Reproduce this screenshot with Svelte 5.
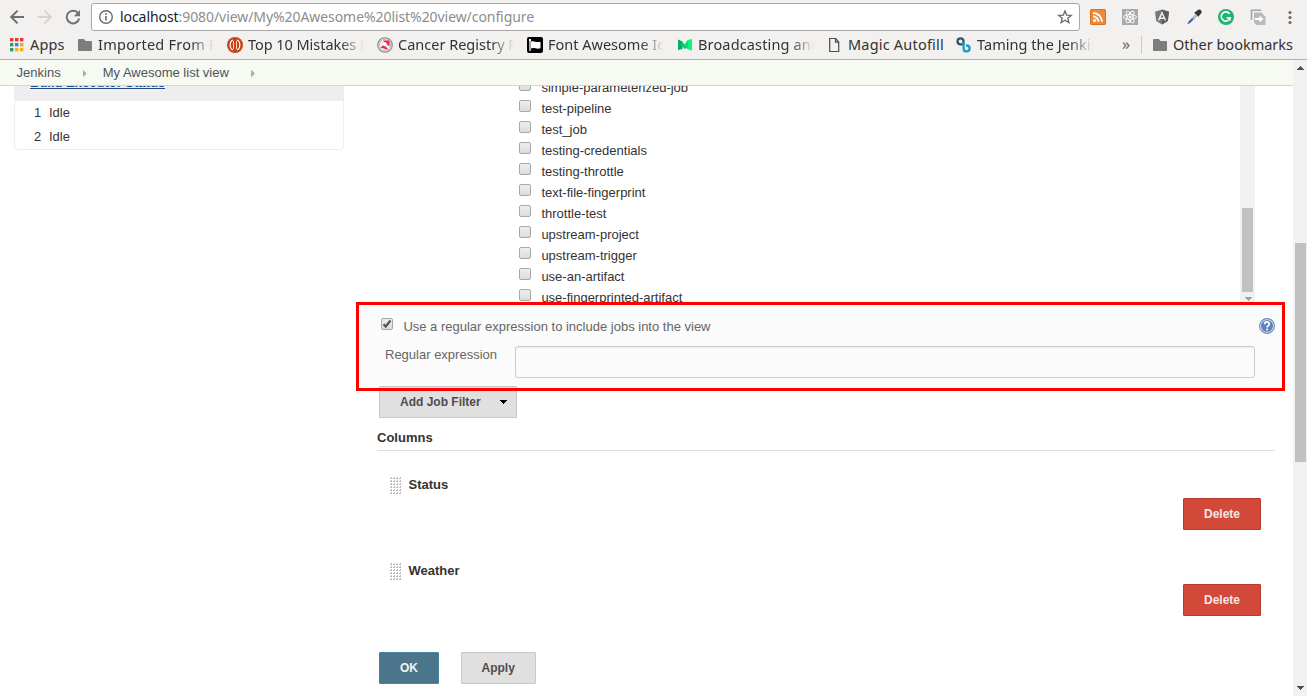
<script>
  const bookmarks = [
    { icon: 'apps', text: 'Apps', width: 68, pad: 20, ls: 0.15 },
    { icon: 'folder', text: 'Imported From Fi', width: 149, pad: 20, fade: true, ls: 0.25 },
    { icon: 'tomato', text: 'Top 10 Mistakes M', width: 150, pad: 21, fade: true, ls: -0.05 },
    { icon: 'cancer', text: 'Cancer Registry P', width: 150, pad: 21, fade: true, ls: 0 },
    { icon: 'flag', text: 'Font Awesome Ico', width: 150, pad: 21, fade: true, ls: 0 },
    { icon: 'medium', text: 'Broadcasting and', width: 150, pad: 21, fade: true, ls: 0.15 },
    { icon: 'page', text: 'Magic Autofill', width: 129, pad: 21, ls: 0.2 },
    { icon: 'links', text: 'Taming the Jenkin', width: 150, pad: 21, fade: true, ls: 0.05 }
  ];
  const extensions = ['rss', 'react', 'angular', 'dropper', 'grammar', 'copy', 'menu'];
  const jobs = [
    'simple-parameterized-job', 'test-pipeline', 'test_job', 'testing-credentials',
    'testing-throttle', 'text-file-fingerprint', 'throttle-test', 'upstream-project',
    'upstream-trigger', 'use-an-artifact', 'use-fingerprinted-artifact'
  ];
  const columns = ['Status', 'Weather'];
  const appColors = ['#e53a30', '#e53a30', '#e53a30', '#2f9e58', '#3a80e8', '#e9a820', '#2f9e58', '#f2b50f', '#f2b50f'];
</script>

{#snippet icon(name)}
  <svg class="icon" width="16" height="16" viewBox="0 0 16 16" fill="none">
    {#if name === 'back' || name === 'forward'}
      <g transform={name === 'forward' ? 'matrix(-1 0 0 1 16 0)' : ''} stroke={name === 'back' ? '#6e6e6e' : '#d5d4d3'} stroke-width="2">
        <path d="M15 8H2.5M8.6 1.6 2.2 8l6.4 6.4" />
      </g>
    {:else if name === 'reload'}
      <path d="M13.2 4.4A6.3 6.3 0 1 0 14.2 9.5" stroke="#737373" stroke-width="2" />
      <path d="M15 1v6.3H8.8z" fill="#737373" />
    {:else if name === 'info'}
      <circle cx="8" cy="8" r="6.3" stroke="#6b6b6b" stroke-width="1.4" />
      <path d="M8 7v4.4M8 4.3v1.6" stroke="#6b6b6b" stroke-width="1.6" />
    {:else if name === 'star'}
      <path d="m8 1.9 1.7 4.2 4.6.3-3.5 2.9 1.1 4.4L8 11.3l-3.9 2.4 1.1-4.4-3.5-2.9 4.6-.3z" stroke="#686868" stroke-width="1.3" />
    {:else if name === 'apps'}
      {#each appColors as c, i}
        <rect x={(i % 3) * 5} y={1 + Math.floor(i / 3) * 5} width="3.4" height="3.4" fill={c} />
      {/each}
    {:else if name === 'folder'}
      <path d="M1 2h5l1.6 2H13a1 1 0 0 1 1 1v8a1 1 0 0 1-1 1H1a1 1 0 0 1-1-1V3a1 1 0 0 1 1-1z" fill="#7d7d7d" />
    {:else if name === 'tomato'}
      <circle cx="8" cy="8" r="8" fill="#cb4216" />
      <path d="M6 3C4.300 3.600 3.200 5.300 3.200 8s1.100 4.400 2.800 5M10 3c1.700.6 2.800 2.300 2.800 5s-1.100 4.400-2.800 5" stroke="#fff" stroke-width="1.200" />
      <path d="M6.500 4v8M9.500 4v8" stroke="#f6d8cb" stroke-width="1" />
    {:else if name === 'cancer'}
      <circle cx="8" cy="8" r="7.300" fill="#ececec" stroke="#858585" stroke-width="1.100" />
      <circle cx="8" cy="8" r="5.700" stroke="#aaa" stroke-dasharray="3 1" />
      <path d="M6 3.500h6.500V9L9.500 7.500z" fill="#e8294c" />
      <path d="M3.500 10.500 6 8.500l2.500 1 2.500 2.500-2 .5-2-1z" fill="#e8294c" />
      <path d="m5 7.500 3-2.500 2.500 2L7.500 9z" fill="#fff" />
    {:else if name === 'flag'}
      <rect width="16" height="16" rx="2" fill="#000" />
      <path d="M3 3v11" stroke="#fff" stroke-width="1.300" />
      <path d="M4 4.500c3-1.200 5 1.500 9.500.2v6.600c-4.500 1.300-6.500-1.500-9.500.2z" fill="#fff" />
      <circle cx="3" cy="3" r="1.200" fill="#fff" />
    {:else if name === 'medium'}
      <path d="M1 2.500 5.500 4.500v7.500L1 13z" fill="#00ab6b" />
      <path d="m4.500 4 6 6.500-2.500 1.500L4.500 9z" fill="#00cf70" />
      <path d="m11 3 4-1v11.500L10 12V7z" fill="#0af579" />
      <path d="M7.500 7.500 11 2.700V11z" fill="#06df70" />
    {:else if name === 'page'}
      <path d="M2.700 1.500h6l3 3.500v9.500h-9z" stroke="#4c4c4c" stroke-width="1.200" />
      <path d="M8.500 1.500V5.200h3.200" stroke="#4c4c4c" stroke-width="1.200" />
    {:else if name === 'links'}
      <path d="M8 7.300H4.200A3 3 0 1 1 7.500 4v3.500" stroke="#31566a" stroke-width="2.300" />
      <path d="M7.600 5.500V11.600A3 3 0 1 0 11 8.500H10" stroke="#219bc0" stroke-width="2.300" />
    {:else if name === 'rss'}
      <rect width="16" height="16" rx="2" fill="#ef8a3a" />
      <rect x=".5" y=".5" width="15" height="15" rx="1.500" stroke="#dc7020" />
      <circle cx="4.600" cy="11.400" r="1.500" fill="#fff" />
      <path d="M3.200 7.500A5.300 5.300 0 0 1 8.500 12.800M3.200 4A8.800 8.800 0 0 1 12 12.800" stroke="#fff" stroke-width="1.800" />
    {:else if name === 'react'}
      <rect width="16" height="16" fill="#a9a9a9" />
      <g stroke="#fff" stroke-width=".9">
        <ellipse cx="8" cy="8" rx="6.500" ry="2.500" />
        <ellipse cx="8" cy="8" rx="6.500" ry="2.500" transform="rotate(60 8 8)" />
        <ellipse cx="8" cy="8" rx="6.500" ry="2.500" transform="rotate(120 8 8)" />
      </g>
      <circle cx="8" cy="8" r="1.300" fill="#fff" />
    {:else if name === 'angular'}
      <path d="m8 .5 7 2.300-1.200 9.200L8 15.500l-5.800-3.500L1 2.800z" fill="#777" />
      <path d="m8 .5 7 2.300-1.200 9.200L8 15.500z" fill="#5d5d5d" />
      <path d="M4.600 11.400 8 3.800l3.400 7.600M5.700 9.200h4.600" stroke="#eee" stroke-width="1.400" />
    {:else if name === 'dropper'}
      <path d="m10 5.500-7.300 7.300-.9 2 2-.9 7.300-7.300" fill="#d6e0f4" stroke="#8d9096" stroke-width="1" />
      <path d="m6 9.500-3.300 3.300L2 14.500l1.900-.7L7.800 9.800z" fill="#2755d0" />
      <path d="M9 3.200 13 7.200M10 4.200 12.300 1.700a1.500 1.500 0 0 1 2.100 2.100L12.200 6z" fill="#333" stroke="#333" stroke-width="1.800" />
    {:else if name === 'grammar'}
      <circle cx="8" cy="8" r="8" fill="#1cb574" />
      <path d="M11.500 4.700A4.600 4.600 0 1 0 12.200 9H8.500" stroke="#fff" stroke-width="1.600" />
      <path d="M12 8.200v3.400" stroke="#fff" stroke-width="1.200" />
    {:else if name === 'copy'}
      <path d="M1.500 11V1.200H11" stroke="#a5a5a5" stroke-width="1.600" />
      <path d="M4 3.500h7.500L15.500 8v8H6.500L4 13.500z" fill="#b9b9b9" />
      <path d="M5 9h4.500V6.500l4 3.500-4 3.500V11H5z" fill="#fff" />
    {:else if name === 'menu'}
      <circle cx="8" cy="3.500" r="1.600" fill="#6b6b6b" /><circle cx="8" cy="8.500" r="1.600" fill="#6b6b6b" /><circle cx="8" cy="13.500" r="1.600" fill="#6b6b6b" />
    {:else if name === 'help'}
      <circle cx="8" cy="8" r="7.400" fill="#e9eef6" stroke="#6584b4" stroke-width="1.100" />
      <circle cx="8" cy="8" r="6" fill="#5f82b5" />
      <path d="M5.700 6.200c0-3 4.600-2.900 4.600-.2 0 1.700-2.200 1.800-2.200 3.500" stroke="#fff" stroke-width="1.700" />
      <rect x="7.200" y="10.600" width="1.800" height="1.800" fill="#fff" />
    {/if}
  </svg>
{/snippet}

{#snippet arrow(color, up)}
  <svg class="arrow" width="8" height="4" viewBox="0 0 8 4" shape-rendering="crispEdges">
    <path d={up ? 'M0 4 4 0l4 4z' : 'M0 0h8L4 4z'} fill={color} />
  </svg>
{/snippet}

<div class="window">
  <header class="chrome">
    <div class="toolbar">
      <div class="nav">{@render icon('back')}{@render icon('forward')}{@render icon('reload')}</div>
      <div class="address">
        {@render icon('info')}
        <span class="url"><b>localhost</b>:9080/view/My%20Awesome%20list%20view/configure</span>
        {@render icon('star')}
      </div>
      <div class="extensions">{#each extensions as e}{@render icon(e)}{/each}</div>
    </div>
    <div class="bookmarks">
      {#each bookmarks as b}
        <div class="bookmark" style:width="{b.width}px">
          <span class="mark" style:width="{b.pad}px">{@render icon(b.icon)}</span>
          <span class="label" class:fade={b.fade} style:letter-spacing="{b.ls}px">{b.text}</span>
        </div>
      {/each}
      <span class="more">»</span>
      <div class="other"><span class="mark">{@render icon('folder')}</span><span class="label">Other bookmarks</span></div>
    </div>
  </header>

  <div class="viewport">
    <div class="page">
      <nav class="crumbs">
        <span>Jenkins</span><i></i><span>My Awesome list view</span><i></i>
      </nav>
      <div class="body">
        <aside>
          <div class="executors">
            <div class="head"><a href="#executors">Build Executor Status</a></div>
            <div class="executor"><span>1</span>Idle</div>
            <div class="executor"><span>2</span>Idle</div>
          </div>
        </aside>
        <main>
          <div class="jobs">
            <div class="job-list">
              {#each jobs as job}
                <label class="job"><span class="check"></span>{job}</label>
              {/each}
            </div>
            <div class="inner-scroll"><div class="inner-thumb"></div>{@render arrow('#a0a0a0', false)}</div>
          </div>
          <section class="regex">
            <div class="regex-top">
              <span class="check"><svg width="12" height="12" viewBox="0 0 12 12"><path d="M2.500 6.200 4.700 8.500 9.500 2.500" fill="none" stroke="#555" stroke-width="2.200" /></svg></span>
              <span class="regex-label">Use a regular expression to include jobs into the view</span>
              {@render icon('help')}
            </div>
            <div class="regex-row"><span>Regular expression</span><div class="input"></div></div>
          </section>
          <div class="btn filter">Add Job Filter{@render arrow('#000', false)}</div>
          <h2>Columns</h2>
          {#each columns as c}
            <div class="column">
              <div class="column-title">
                <svg width="12" height="18" shape-rendering="crispEdges">
                  {#each [0, 1, 2, 3, 4, 5] as y}{#each [0, 1, 2, 3] as x}
                    <path d="M{x * 3} {y * 3 + 1}h1v-1h1v2h-2z" fill="#bbb" />
                  {/each}{/each}
                </svg>
                <b>{c}</b>
              </div>
              <div class="btn delete">Delete</div>
            </div>
          {/each}
          <div class="actions"><div class="btn ok">OK</div><div class="btn apply">Apply</div></div>
        </main>
      </div>
    </div>
    <div class="scrollbar">{@render arrow('#505050', true)}<div class="thumb"></div>{@render arrow('#505050', false)}</div>
  </div>
</div>

<style>
  :global(body) { margin: 0; overflow: hidden; background: #fff; }
  .window { width: 1307px; height: 696px; overflow: hidden; display: flex; flex-direction: column; font: 13px/18px "Liberation Sans", Arial, sans-serif; color: #333; }
  .window * { box-sizing: border-box; }
  svg { display: block; flex: none; }
  .chrome { height: 60px; flex: none; background: #f2f1f0; border-bottom: 1px solid #b3b2b1; font-family: "Noto Sans", sans-serif; }
  .toolbar { display: flex; height: 31px; padding-top: 3px; }
  .nav { display: flex; gap: 12px; align-items: center; width: 91px; padding-left: 9px; }
  .address { display: flex; align-items: center; width: 989px; height: 28px; border: 1px solid #a9a8a7; border-radius: 3px; background: #fff; padding: 0 6px; }
  .url { flex: 1; margin-left: 6px; font-size: 14px; letter-spacing: -0.07px; color: #8d8d8d; white-space: nowrap; }
  .url b { font-weight: 400; color: #222; }
  .extensions { display: flex; align-items: center; gap: 16px; padding-left: 10px; }
  .bookmarks { display: flex; align-items: center; height: 28px; padding-left: 10px; color: #333; font-size: 14.5px; white-space: nowrap; }
  .bookmark { display: flex; align-items: center; flex: none; }
  .mark { flex: none; width: 20px; }
  .label { overflow: hidden; line-height: 22px; margin-top: -2px; }
  .fade { width: 116px; mask-image: linear-gradient(90deg, #000 80%, transparent 100%); }
  .more { width: 36px; padding-left: 16px; height: 18px; line-height: 16px; border-right: 1px solid #cbcac9; color: #666; font-size: 16px; }
  .other { display: flex; align-items: center; margin-left: 11px; }
  .viewport { flex: 1; min-height: 0; display: flex; }
  .page { width: 1293px; display: flex; flex-direction: column; min-height: 0; }
  .crumbs { display: flex; align-items: center; height: 26px; flex: none; background: #f6faf2; border-bottom: 1px solid #d3d7cf; padding-left: 16.6px; color: #4d545d; }
  .crumbs i { width: 4px; height: 8px; background: #ababab; clip-path: polygon(0 0, 100% 50%, 0 100%); margin: 2px 16px 0 22px; }
  .body { flex: 1; min-height: 0; overflow: hidden; display: flex; }
  aside { width: 344px; padding-left: 14px; }
  .executors { border: 1px solid #eee; border-top: 0; border-radius: 0 0 4px 4px; height: 64px; overflow: hidden; }
  .head { display: flex; align-items: flex-end; height: 15px; background: #eee; padding: 0 0 9px 15px; overflow: hidden; }
  .head a { flex: none; height: 18px; line-height: 18px; font-weight: 700; color: #204a87; text-decoration: underline; }
  .executor { height: 24px; line-height: 24px; padding-left: 19px; }
  .executor span { display: inline-block; width: 15px; }
  main { flex: 1; display: flex; flex-direction: column; align-items: flex-start; padding-left: 33px; }
  .jobs { display: flex; width: 878px; height: 217px; margin-bottom: -1px; }
  .job-list { width: 863px; height: 217px; overflow: hidden; padding-left: 142px; }
  .job { display: flex; align-items: center; height: 21px; }
  .job:first-child { margin-top: -9px; }
  .check { width: 12px; height: 12px; flex: none; border: 1px solid #a8a8a8; border-radius: 2px; background: linear-gradient(#eee, #dcdcdc); }
  .job .check { margin: -5px 10.4px 0 0; }
  .inner-scroll { width: 15px; height: 217px; background: #f1f1f1; display: flex; flex-direction: column; align-items: center; padding-top: 122px; }
  .inner-thumb { width: 11px; height: 84px; background: #c1c1c1; margin-bottom: 5px; }
  .regex { position: relative; width: 929px; height: 89px; margin-left: -21px; background: #fbfbfb; color: #666; padding: 15px 10px 0 25px; }
  .regex::after { content: ""; position: absolute; inset: 0; border: 3px solid #fe0000; }
  .regex { z-index: 1; }
  .regex-top { display: flex; align-items: center; height: 18px; }
  .regex-top .check { margin: -4px 10.4px 0 0; }
  .regex-top .check svg { margin: -1px; }
  .regex-label { flex: 1; padding-top: 2px; }
  .regex-row { display: flex; margin-top: 11px; padding-left: 4px; line-height: 17px; }
  .regex-row span { width: 130px; }
  .input { width: 740px; height: 32px; border: 1px solid #ccc; border-radius: 3px; box-shadow: inset 0 1px 1px #0001; }
  .btn { display: flex; align-items: center; height: 32px; padding: 0 20px; border: 1px solid #c9c9c9; border-radius: 1px; background: #e0e0e0; color: #4d4d4d; font-size: 12px; font-weight: 700; flex: none; white-space: nowrap; }
  .filter { width: 138px; margin: -5px 0 0 2px; padding-right: 0; position: relative; z-index: 1; clip-path: polygon(0 0, 100% 0, 100% 2px, 0 2px, 0 5px, 100% 5px, 100% 100%, 0 100%); }
  .filter :global(.arrow) { margin-left: 18px; }
  h2 { width: 898px; height: 33px; margin: 0; padding-top: 11px; border-bottom: 1px solid #ddd; font-size: 13px; line-height: 18px; }
  .column { width: 884px; height: 86px; padding-top: 25px; display: flex; flex-direction: column; flex: none; }
  .column-title { display: flex; align-items: flex-start; padding-left: 13px; height: 22px; }
  .column-title svg { margin: 1px 6.5px 0 0; }
  .delete { align-self: flex-end; width: 78px; background: #d24939; border-color: #b73a2b; color: #f4e6e4; }
  .actions { display: flex; gap: 22px; padding: 29px 0 0 2px; }
  .ok { width: 60px; background: #4b758b; border-color: #4786a0; color: #eef4f7; }
  .apply { width: 75px; padding-left: 19.5px; }
  .scrollbar { width: 14px; background: #f1f1f1; display: flex; flex-direction: column; align-items: center; padding: 6px 0; }
  .thumb { width: 11px; height: 219px; background: #c1c1c1; margin: 173px 0 auto; }
</style>
